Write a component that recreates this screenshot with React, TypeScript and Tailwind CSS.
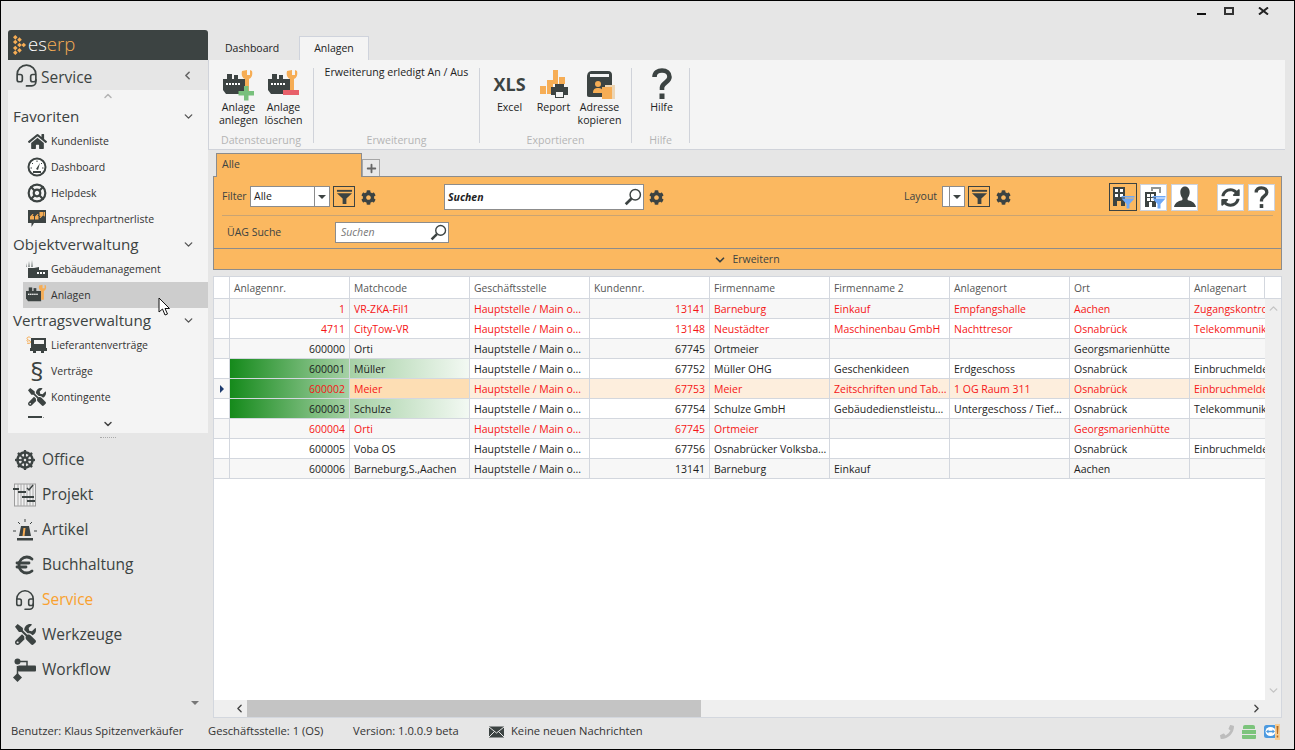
import React from 'react';
import { ChevronDown, ChevronLeft, ChevronRight, ChevronUp, Euro, Headset, LifeBuoy, Plus } from 'lucide-react';
import { FaCog, FaDharmachakra, FaHome, FaPhoneAlt, FaSyncAlt, FaTools } from 'react-icons/fa';

const DARK = '#3c4342';

const Logo = () => (
  <svg width="13" height="20" viewBox="0 0 17 26">
    {[[3, 3], [3, 9], [3, 17], [3, 23], [8.5, 6], [8.5, 13], [8.5, 20], [14, 13]].map(([x, y], i) => (
      <path key={i} d={`M${x} ${y - 3}L${x + 3} ${y}L${x} ${y + 3}L${x - 3} ${y}Z`} fill="#f6ad55" />
    ))}
  </svg>
);

const Factory = ({ size = 32, sign }: { size?: number; sign?: 'plus' | 'minus' }) => (
  <svg width={size} height={size} viewBox="0 0 32 32">
    <rect x="4" y="5" width="5" height="6" fill={DARK} />
    <rect x="11" y="6" width="4" height="5" fill={DARK} />
    <path d="M0 10H22V25H3L0 21Z" fill={DARK} />
    {[3, 6, 9, 12, 15].map(x => <rect key={x} x={x} y="14" width="2" height="2" fill="#fff" />)}
    <path d="M19 2C18 6 19.5 9 22 10V23H26V10C28.5 9 30 6 29 2L27 1V6H24V1Z" fill="#f6ad55" />
    {sign === 'plus' && <path d="M21 17H25.5V22H31V26.5H25.5V31.5H21V26.5H15.5V22H21Z" fill="#78c07c" />}
    {sign === 'minus' && <rect x="15" y="21" width="16" height="5" fill="#e8606a" />}
  </svg>
);

const Buildings = () => (
  <svg width="24" height="24" viewBox="0 0 24 24">
    <path d="M4 4L5 10H3ZM7 3L8 10H6ZM1 6L2 10H1Z" fill="#8f9594" />
    <path d="M3 11H9L14 10V13H23V21H3Z" fill={DARK} />
    {[12, 15, 18].map(x => <rect key={x} x={x} y="15" width="2" height="2" fill="#fff" />)}
  </svg>
);

const Gauge = () => (
  <svg width="20" height="20" viewBox="0 0 20 20">
    <circle cx="10" cy="10" r="8.5" fill="#fff" stroke={DARK} strokeWidth="2" />
    <path d="M3.5 11H5M5 6L6 7M10 3.5V5M15 6L14 7M15 11H16.5" stroke={DARK} strokeWidth="1" />
    <path d="M9 12L13 6L11 13Z" fill={DARK} />
    <path d="M6 15H14" stroke={DARK} strokeWidth="2" />
  </svg>
);

const Quote = () => (
  <svg width="20" height="20" viewBox="0 0 20 20">
    <path d="M1 1H19V14H7L4.5 18V14H1Z" fill={DARK} />
    <path d="M3.5 10V7L6 4.5H7L6 6.5H7.5V10ZM8.5 10V7L11 4.5H12L11 6.5H12V10Z" fill="#f6ad55" transform="translate(-0.5 0.5)" />
    <path d="M12.5 3H16V6.5L13.5 9H12.5L13.5 7H12.5ZM16.5 3H18V6.5L17 8V7H16.5Z" fill="#f6ad55" />
  </svg>
);

const Truck = () => (
  <svg width="22" height="20" viewBox="0 0 22 20">
    <path d="M5 3H20V13H21V16H18V18H15V16H10V18H7V16H4V13H5Z" fill={DARK} />
    <rect x="8" y="5" width="10" height="4" fill="#f4f4f4" />
    <path d="M4.5 2.5C3 1.5 1 2 1 3.5C1 5.5 4.5 5 4.5 7C4.5 8.5 2.5 9 1 8M1.5 4.5C0.5 5.5 1 6.5 2.5 7" fill="none" stroke="#f6ad55" strokeWidth="1" />
  </svg>
);

const CutOffIcon = () => (
  <svg width="22" height="20" viewBox="0 0 22 20">
    <rect x="2" y="3" width="14" height="6" fill={DARK} />
    <rect x="4" y="5" width="9" height="2" fill="#f4f4f4" />
    <path d="M17 4L21 8H17Z" fill={DARK} />
  </svg>
);

const Gantt = () => (
  <svg width="24" height="24" viewBox="0 0 24 24">
    <rect x="1.5" y="1" width="21" height="22" fill="#f0f0f0" stroke="#9c9c9c" />
    <path d="M5 1V23M8 1V23M11 1V23M14 1V23M17 1V23M20 1V23" stroke="#a8a8a8" strokeWidth="1" />
    <path d="M0 5H6V7H0ZM5 8H13V10H5ZM9 13H21V15H9ZM14 17H22V19H14Z" fill={DARK} />
    <path d="M14 5L16 7L20 2" fill="none" stroke={DARK} strokeWidth="1.5" />
  </svg>
);

const Alarm = () => (
  <svg width="24" height="24" viewBox="0 0 24 24">
    <path d="M8 8H16L18 18H6Z" fill={DARK} />
    <path d="M10.5 10H12.5L11.5 18H9.5Z" fill="#f6ad55" />
    <rect x="4" y="20" width="16" height="2.5" fill={DARK} />
    <path d="M12 1V4M5 4L7 6M19 4L17 6M0 13H3M21 13H24" stroke={DARK} strokeWidth="1" />
  </svg>
);

const Workflow = () => (
  <svg width="24" height="24" viewBox="0 0 24 24">
    <circle cx="4.5" cy="3.5" r="3" fill={DARK} />
    <path d="M4.5 15L9 19.5L4.5 24L0 19.5Z" fill={DARK} />
    <path d="M4 3.5H14V8M4.5 8V16" fill="none" stroke={DARK} strokeWidth="1.5" />
    <rect x="5" y="7.5" width="18" height="6" rx="1" fill={DARK} />
  </svg>
);

const Funnel = ({ color = DARK, size = 18 }: { color?: string; size?: number }) => (
  <svg width={size} height={size} viewBox="0 0 18 18">
    <rect x="1" y="2" width="16" height="2" fill={color} />
    <path d="M1 5.5H17L11 11V17H7V11Z" fill={color} />
  </svg>
);

const Magnifier = ({ size = 16 }: { size?: number }) => (
  <svg width={size} height={size} viewBox="0 0 16 16">
    <circle cx="10" cy="6" r="4.6" fill="#fff" stroke={DARK} strokeWidth="1.3" />
    <path d="M6.5 9.5L1.5 14.5" stroke={DARK} strokeWidth="2.4" />
  </svg>
);

const Report = () => (
  <svg width="32" height="32" viewBox="0 0 32 32">
    <rect x="2" y="17" width="6" height="8" fill="#f6ad55" />
    <rect x="9" y="11" width="6" height="14" fill="#f6ad55" />
    <rect x="15" y="1" width="5" height="14" fill="#f6ad55" />
    <rect x="21" y="8" width="6" height="7" fill="#f6ad55" />
    <path d="M17 15H26V18H30V26H26V29H17V26H13V18H17Z" fill={DARK} />
    <rect x="18" y="23" width="7" height="5" fill="#f4f4f4" />
  </svg>
);

const AddressBook = () => (
  <svg width="32" height="32" viewBox="0 0 32 32">
    <path d="M3 8C3 4 5 2 8 2H24C27 2 28 4 28 6V28H5C3.5 28 3 27 3 26Z" fill={DARK} />
    <path d="M6 5H25V8H6Z" fill="#f4f4f4" />
    <circle cx="14" cy="15" r="3" fill="#f6ad55" />
    <path d="M9 24C9 20 11 19 14 19C17 19 19 20 19 24Z" fill="#f6ad55" />
    <rect x="21" y="16" width="10" height="14" fill="#ecd5b4" />
    <rect x="18" y="18" width="10" height="12" fill="#f6ad55" />
  </svg>
);

const FilterBuilding = ({ stacked }: { stacked?: boolean }) => (
  <svg width="24" height="24" viewBox="0 0 24 24">
    {stacked && <path d="M9 2H19V8H17V4H11V6H9Z" fill="#8f9594" />}
    <path d={stacked ? 'M3 7H14V22H10V17H7V22H3Z' : 'M2 2H14V21H10V16H6V21H2Z'} fill={DARK} />
    {(stacked ? [[5, 9], [9, 9], [5, 13], [9, 13]] : [[4, 4], [9, 4], [4, 9], [9, 9]]).map(([x, y]) => (
      <rect key={`${x}-${y}`} x={x} y={y} width="3" height="3" fill="#fff" />
    ))}
    <rect x="10.5" y="11" width="13" height="1.5" fill="#6ea8f7" />
    <path d="M10.5 13.5H23.5L18.5 19V23.5H15.5V19Z" fill="#6ea8f7" />
  </svg>
);

const Bust = () => (
  <svg width="24" height="24" viewBox="0 0 24 24">
    <path d="M12 1.5C15 1.5 16.7 4 16.7 7.3C16.7 9.8 15.7 11.8 14.6 13V15C17.6 16 22 17 23 22H1C2 17 6.4 16 9.4 15V13C8.3 11.8 7.3 9.8 7.3 7.3C7.3 4 9 1.5 12 1.5Z" fill={DARK} />
  </svg>
);

const HelpMark = ({ w, h, className }: { w: number; h: number; className?: string }) => (
  <svg className={className} width={w} height={h} viewBox="0 0 20 31">
    <path d="M2.5 9C2.5 4.5 6 2.5 10 2.5C14.5 2.5 17.5 5 17.5 9C17.5 14 10.5 14.5 10 19.5V22" fill="none" stroke={DARK} strokeWidth="4.6" />
    <rect x="7.5" y="25.5" width="5" height="5.5" fill={DARK} />
  </svg>
);

const Envelope = () => (
  <svg width="15" height="12" viewBox="0 0 15 12">
    <rect width="15" height="11" y="0.5" fill={DARK} />
    <path d="M0 1L7.5 7L15 1M0 11L5.5 5.5M15 11L9.5 5.5" fill="none" stroke="#e6e6e6" strokeWidth="1" />
  </svg>
);

const TeamViewer = () => (
  <svg width="16" height="16" viewBox="0 0 16 16">
    <rect x="0" y="1" width="13" height="13" rx="2.5" fill="#4c9ae0" />
    <ellipse cx="6.5" cy="7.5" rx="5" ry="4.5" fill="#fff" />
    <path d="M2 7.5L4.5 5.5V6.8H8.5V5.5L11 7.5L8.5 9.5V8.2H4.5V9.5Z" fill="#4c9ae0" />
    <rect x="11" y="0" width="5" height="16" fill="#f6cd95" />
    <path d="M12.5 2H14.5L14 10H13ZM12.7 11.5H14.3V13.5H12.7Z" fill="#b56a20" />
  </svg>
);

const SideItem = ({ icon, label, active }: { icon: React.ReactNode; label?: string; active?: boolean }) => (
  <div className={`h-[26px] shrink-0 ml-[15px] flex items-center text-[10.5px] text-[#333] ${active ? 'bg-[#cdcdcd]' : ''}`}>
    <div className="w-[28px] flex justify-center">{icon}</div>
    {label && <span className="pt-[2px]">{label}</span>}
  </div>
);

const SideSection = ({ label }: { label: string }) => (
  <div className="h-[24px] shrink-0 pl-[5px] pr-[13px] flex items-center justify-between text-[15.2px] text-[#3c4342]">
    <span>{label}</span>
    <ChevronDown size={13} strokeWidth={2.5} color="#555" />
  </div>
);

const ModuleItem = ({ icon, label, orange }: { icon: React.ReactNode; label: string; orange?: boolean }) => (
  <div className={`h-[35px] flex items-center text-[15.5px] ${orange ? 'text-[#f9a12e]' : 'text-[#3c4342]'}`}>
    <div className="w-[34px] flex justify-center">{icon}</div>
    <span>{label}</span>
  </div>
);

const Sidebar = () => (
  <aside className="w-[200px] ml-[7px] flex flex-col shrink-0">
    <div className="h-[30px] bg-[#3c4342] rounded-t-[3px] flex items-center pl-[5px] gap-[2px]">
      <Logo />
      <span className="text-[18.5px] font-light leading-none pb-[2px] text-white">es<span className="text-[#f6ad55]">erp</span></span>
    </div>
    <div className="h-[30px] flex items-center pl-[6px] pr-[14px] text-[15.5px] text-[#3c4342]">
      <Headset size={25} strokeWidth={1.6} color={DARK} />
      <span className="ml-[2px] pt-[5px]">Service</span>
      <ChevronLeft size={13} strokeWidth={3} color="#666" className="ml-auto" />
    </div>
    <div className="h-[343px] bg-[#f4f4f4] flex flex-col relative overflow-hidden">
      <div className="h-[14px] shrink-0 flex justify-center"><ChevronUp size={12} strokeWidth={3} color="#b5b5b5" /></div>
      <SideSection label="Favoriten" />
      <SideItem icon={<FaHome size={19} color={DARK} />} label="Kundenliste" />
      <SideItem icon={<Gauge />} label="Dashboard" />
      <SideItem icon={<LifeBuoy size={20} strokeWidth={2.6} color={DARK} />} label="Helpdesk" />
      <SideItem icon={<Quote />} label="Ansprechpartnerliste" />
      <SideSection label="Objektverwaltung" />
      <SideItem icon={<Buildings />} label="Gebäudemanagement" />
      <SideItem icon={<Factory size={22} />} label="Anlagen" active />
      <SideSection label="Vertragsverwaltung" />
      <SideItem icon={<Truck />} label="Lieferantenverträge" />
      <SideItem icon={<span className="text-[26px] leading-none text-[#3c4342]">§</span>} label="Verträge" />
      <SideItem icon={<FaTools size={18} color={DARK} />} label="Kontingente" />
      <SideItem icon={<CutOffIcon />} />
      <div className="absolute bottom-0 left-0 right-0 h-[15px] bg-[#f4f4f4] flex justify-center">
        <ChevronDown size={12} strokeWidth={3} color="#444" />
      </div>
    </div>
    <div className="h-[9px] flex justify-center items-center">
      <div className="w-[16px] h-[2px] border-t border-dotted border-[#aaa]" />
    </div>
    <div className="flex flex-col">
      <ModuleItem icon={<FaDharmachakra size={20} color={DARK} />} label="Office" />
      <ModuleItem icon={<Gantt />} label="Projekt" />
      <ModuleItem icon={<Alarm />} label="Artikel" />
      <ModuleItem icon={<Euro size={24} strokeWidth={2.8} color={DARK} />} label="Buchhaltung" />
      <ModuleItem icon={<Headset size={22} strokeWidth={1.7} color={DARK} />} label="Service" orange />
      <ModuleItem icon={<FaTools size={21} color={DARK} />} label="Werkzeuge" />
      <ModuleItem icon={<Workflow />} label="Workflow" />
    </div>
    <div className="mt-[14px] flex justify-end pr-[9px]">
      <div className="w-0 h-0 border-x-[4px] border-x-transparent border-t-[4px] border-t-[#777]" />
    </div>
  </aside>
);

const RibbonBtn = ({ w, icon, lines }: { w: string; icon: React.ReactNode; lines: string[] }) => (
  <div className={`${w} flex flex-col items-center text-[10.6px] leading-[13px] text-[#222]`}>
    <div className="h-[33px] flex items-center justify-center">{icon}</div>
    <div className="text-center whitespace-nowrap">
      {lines.map(l => <div key={l}>{l}</div>)}
    </div>
  </div>
);

const RibbonGroup = ({ w, label, className, children }: { w: string; label: string; className?: string; children: React.ReactNode }) => (
  <div className={`${w} h-[75px] mt-[8px] border-r border-[#d0d3da]`}>
    <div className={`h-[66px] flex justify-center ${className ?? ''}`}>{children}</div>
    <div className="text-[10.6px] leading-[13px] text-[#b4b4b4] text-center">{label}</div>
  </div>
);

const Ribbon = () => (
  <div className="w-[1077px]">
    <div className="h-[30px] flex items-end">
      <div className="w-[91px] h-[23px] pl-[17px] flex items-center text-[10.5px] text-[#222]">Dashboard</div>
      <div className="w-[70px] h-[24px] bg-[#f4f4f4] border border-b-0 border-[#cfd3dc] flex items-center justify-center text-[10.5px] text-[#222]">Anlagen</div>
    </div>
    <div className="h-[90px] bg-[#f4f4f4] border-l border-b border-[#d0d3da] flex">
      <RibbonGroup w="w-[105px]" label="Datensteuerung">
        <RibbonBtn w="w-[45px]" icon={<Factory sign="plus" />} lines={['Anlage', 'anlegen']} />
        <RibbonBtn w="w-[45px]" icon={<Factory sign="minus" />} lines={['Anlage', 'löschen']} />
      </RibbonGroup>
      <RibbonGroup w="w-[166px]" label="Erweiterung">
        <div className="text-[10.6px] leading-[13px] text-[#222] whitespace-nowrap -mt-[2px]">Erweiterung erledigt An / Aus</div>
      </RibbonGroup>
      <RibbonGroup w="w-[152px]" label="Exportieren">
        <RibbonBtn w="w-[44px]" icon={<span className="text-[18px] font-bold text-[#3c4342]">XLS</span>} lines={['Excel']} />
        <RibbonBtn w="w-[44px]" icon={<Report />} lines={['Report']} />
        <RibbonBtn w="w-[48px]" icon={<AddressBook />} lines={['Adresse', 'kopieren']} />
      </RibbonGroup>
      <RibbonGroup w="w-[58px]" label="Hilfe" className="pl-[2px]">
        <RibbonBtn w="w-[44px]" icon={<HelpMark w={20} h={31} className="-mt-[3px]" />} lines={['Hilfe']} />
      </RibbonGroup>
    </div>
  </div>
);

const ToolBtn = ({ active, children }: { active?: boolean; children: React.ReactNode }) => (
  <div className={`flex items-center justify-center ${active ? 'w-[28px] h-[28px] border border-[#3c4342]' : 'w-[27px] h-[27px] bg-white border border-[#cdd2dc]'}`}>
    {children}
  </div>
);

const FunnelBtn = () => (
  <div className="w-[22px] h-[21px] mb-[1px] border border-[#3c4342] flex items-center justify-center"><Funnel size={17} /></div>
);

const Caret = () => <div className="w-0 h-0 border-x-[4px] border-x-transparent border-t-[4px] border-t-[#3c4342]" />;

const FilterPanel = () => (
  <div className="ml-[5px] w-[1069px]">
    <div className="h-[26px] flex items-end pl-[3px]">
      <div className="w-[146px] h-[24px] bg-[#fbb860] border border-b-0 border-[#8c8c8c] pl-[5px] pt-[3px] text-[10.5px] leading-[14px] text-[#3c4342] relative top-[1px]">Alle</div>
      <div className="w-[18px] h-[17px] bg-[#e8e8e8] border border-b-0 border-[#a6a6a6] flex items-center justify-center">
        <Plus size={13} strokeWidth={3.4} color="#666" />
      </div>
    </div>
    <div className="bg-[#fbb860] border border-[#8c8c8c] text-[10.5px] text-[#3c4342]">
      <div className="mx-[8px] h-[39px] pt-[2px] border-b border-[#c9a473] flex items-center">
        <span className="w-[28px]">Filter</span>
        <div className="w-[80px] h-[21px] mb-[1px] bg-white border border-[#8c8c8c] flex items-center pl-[3px] text-[#222]">
          <span className="flex-1 pt-[1px]">Alle</span>
          <div className="w-[15px] h-full border-l border-[#8c8c8c] flex items-center justify-center"><Caret /></div>
        </div>
        <div className="ml-[3px]"><FunnelBtn /></div>
        <FaCog size={15} color={DARK} className="ml-[6px]" />
        <div className="ml-[68px] w-[200px] h-[26px] bg-white border border-[#8c8c8c] flex items-center pl-[3px] pr-[1px] justify-between">
          <span className="italic font-bold text-[#222] pt-[1px]">Suchen</span>
          <Magnifier size={18} />
        </div>
        <FaCog size={15} color={DARK} className="ml-[5px]" />
        <span className="ml-[240px] w-[38px]">Layout</span>
        <div className="w-[23px] h-[21px] mb-[1px] bg-white border border-[#8c8c8c] flex items-center">
          <div className="w-[7px] h-full border-r border-[#8c8c8c]" />
          <div className="flex-1 flex items-center justify-center"><Caret /></div>
        </div>
        <div className="ml-[3px]"><FunnelBtn /></div>
        <FaCog size={15} color={DARK} className="ml-[6px]" />
        <div className="ml-[98px]"><ToolBtn active><FilterBuilding /></ToolBtn></div>
        <div className="ml-[3px]"><ToolBtn><FilterBuilding stacked /></ToolBtn></div>
        <div className="ml-[4px]"><ToolBtn><Bust /></ToolBtn></div>
        <div className="ml-[19px]"><ToolBtn><FaSyncAlt size={19} color={DARK} /></ToolBtn></div>
        <div className="ml-[4px] -mr-[8px]"><ToolBtn><HelpMark w={15} h={22} /></ToolBtn></div>
      </div>
      <div className="h-[33px] pl-[13px] flex items-center border-b border-[#8c8c8c]">
        <span className="w-[108px] pt-[1px]">ÜAG Suche</span>
        <div className="w-[114px] h-[21px] mt-[1px] bg-white border border-[#8c8c8c] flex items-center pl-[5px] pr-[1px] justify-between">
          <span className="italic text-[10.5px] text-[#777]">Suchen</span>
          <Magnifier size={17} />
        </div>
      </div>
      <div className="h-[20px] pt-[2px] pr-[2px] flex items-center justify-center gap-[5px]">
        <ChevronDown size={14} strokeWidth={3} color={DARK} />
        <span>Erweitern</span>
      </div>
    </div>
  </div>
);

const HEAD = ['Anlagennr.', 'Matchcode', 'Geschäftsstelle', 'Kundennr.', 'Firmenname', 'Firmenname 2', 'Anlagenort', 'Ort', 'Anlagenart'];
const HS = 'Hauptstelle / Main o...';

type Row = { c: string[]; red?: boolean; sel?: boolean; green?: boolean };
const ROWS: Row[] = [
  { c: ['1', 'VR-ZKA-Fil1', HS, '13141', 'Barneburg', 'Einkauf', 'Empfangshalle', 'Aachen', 'Zugangskontrolle'], red: true },
  { c: ['4711', 'CityTow-VR', HS, '13148', 'Neustädter', 'Maschinenbau GmbH', 'Nachttresor', 'Osnabrück', 'Telekommunikation'], red: true },
  { c: ['600000', 'Orti', HS, '67745', 'Ortmeier', '', '', 'Georgsmarienhütte', ''] },
  { c: ['600001', 'Müller', HS, '67752', 'Müller OHG', 'Geschenkideen', 'Erdgeschoss', 'Osnabrück', 'Einbruchmeldeanlage'], green: true },
  { c: ['600002', 'Meier', HS, '67753', 'Meier', 'Zeitschriften und Tab...', '1 OG Raum 311', 'Osnabrück', 'Einbruchmeldeanlage'], red: true, sel: true, green: true },
  { c: ['600003', 'Schulze', HS, '67754', 'Schulze GmbH', 'Gebäudedienstleistu...', 'Untergeschoss / Tief...', 'Osnabrück', 'Telekommunikation'], green: true },
  { c: ['600004', 'Orti', HS, '67745', 'Ortmeier', '', '', 'Georgsmarienhütte', ''], red: true },
  { c: ['600005', 'Voba OS', HS, '67756', 'Osnabrücker Volksba...', '', '', 'Osnabrück', 'Einbruchmeldeanlage'] },
  { c: ['600006', 'Barneburg,S.,Aachen', HS, '13141', 'Barneburg', 'Einkauf', '', 'Aachen', ''] },
];

const rightAligned = (i: number) => i === 0 || i === 3;

const cellBg = (r: Row, i: number, idx: number) => {
  if (r.green && i === 0) return 'bg-[linear-gradient(90deg,#158a1b,#a6d1a6)]';
  if (r.sel && i === 1) return 'bg-[#fddeb4]';
  if (r.green && i === 1) return 'bg-[linear-gradient(90deg,#a6d1a6,#f3f9f3)]';
  if (r.sel) return 'bg-[#fdeedd]';
  return idx % 2 === 0 ? 'bg-[#f7f7f7]' : 'bg-white';
};

const Grid = () => (
  <div className="mt-[6px] ml-[5px] w-[1069px] flex-1 flex flex-col border border-[#d3d7de] bg-white min-h-0">
    <div className="h-[22px] shrink-0 flex text-[10.3px] text-[#555] border-b border-[#d3d7de]">
      <div className="w-[16px] border-r border-[#d3d7de]" />
      {HEAD.map((h, i) => (
        <div key={h} className={`${i === 8 ? 'w-[75px]' : 'w-[120px]'} border-r border-[#d3d7de] pl-[4px] pt-[3px] flex items-center`}>{h}</div>
      ))}
      <div className="flex-1" />
    </div>
    <div className="flex-1 flex min-h-0">
      <div className="flex-1">
        {ROWS.map((r, idx) => (
          <div key={idx} className="h-[20px] flex text-[10.5px]">
            <div className={`w-[16px] border-r border-b border-[#d3d7de] flex items-center justify-center ${idx % 2 ? 'bg-white' : 'bg-[#f7f7f7]'}`}>
              {r.sel && <div className="w-0 h-0 border-y-[4px] border-y-transparent border-l-[4px] border-l-[#1c3a6e]" />}
            </div>
            {r.c.map((t, i) => (
              <div
                key={i}
                className={`${i === 8 ? 'w-[75px]' : 'w-[120px] border-r'} border-b border-[#d3d7de] px-[4px] pt-[3px] flex items-center overflow-hidden whitespace-nowrap ${rightAligned(i) ? 'justify-end' : ''} ${r.red ? 'text-[#f51515]' : 'text-[#1c1c1c]'} ${cellBg(r, i, idx)}`}
              >
                {t}
              </div>
            ))}
          </div>
        ))}
      </div>
      <div className="w-[16px] bg-[#efefef] flex flex-col items-center justify-between py-[3px]">
        <ChevronUp size={13} strokeWidth={2.5} color="#c4c4c4" />
        <ChevronDown size={13} strokeWidth={2.5} color="#c4c4c4" />
      </div>
    </div>
    <div className="h-[17px] shrink-0 bg-[#efefef] flex items-center">
      <div className="w-[33px] flex justify-end pr-[1px]"><ChevronLeft size={13} strokeWidth={2.5} color="#444" /></div>
      <div className="w-[454px] h-full bg-[#c4c4c4]" />
      <div className="flex-1 flex justify-end pr-[18px]"><ChevronRight size={13} strokeWidth={2.5} color="#444" /></div>
    </div>
  </div>
);

export default function App() {
  return (
    <div className="w-[1295px] h-[750px] box-border border border-black bg-[#e6e6e6] flex flex-col overflow-hidden relative font-['Open_Sans',sans-serif]">
      <div className="h-[29px] shrink-0 flex items-start justify-end">
        <div className="flex items-center pt-[6px] pr-[25px]">
          <div className="w-[9px] h-[8px] flex items-end"><div className="w-[9px] h-[2px] bg-[#111]" /></div>
          <div className="ml-[18px] w-[10px] h-[8px] border-2 border-[#333] bg-[#e6e6e6]" />
          <svg className="ml-[24px]" width="11" height="8" viewBox="0 0 11 8"><path d="M1 0.5L10 7.5M10 0.5L1 7.5" stroke="#222" strokeWidth="2" /></svg>
        </div>
      </div>
      <div className="h-[688px] shrink-0 flex">
        <Sidebar />
        <main className="flex-1 flex flex-col min-w-0">
          <Ribbon />
          <FilterPanel />
          <Grid />
        </main>
      </div>
      <footer className="flex-1 flex items-center text-[11.2px] text-[#333] pr-[14px] pb-[4px]">
        <span className="ml-[10px] w-[197px]">Benutzer: Klaus Spitzenverkäufer</span>
        <span className="w-[145px]">Geschäftsstelle: 1 (OS)</span>
        <span className="w-[136px]">Version: 1.0.0.9 beta</span>
        <Envelope />
        <span className="ml-[7px]">Keine neuen Nachrichten</span>
        <div className="ml-auto flex items-center gap-[8px]">
          <FaPhoneAlt size={14} color="#bdbdbd" className="-scale-x-100" />
          <div className="flex flex-col gap-[1px]">
            <div className="w-[12px] mx-auto h-[4px] rounded-t-[2px] bg-[#7cc47c]" />
            <div className="w-[14px] h-[4px] bg-[#7cc47c]" />
            <div className="w-[14px] h-[4px] rounded-b-[1px] bg-[#7cc47c]" />
          </div>
          <TeamViewer />
        </div>
      </footer>
      <svg className="absolute left-[157px] top-[296px]" width="13" height="20" viewBox="0 0 13 20">
        <path d="M1 1V15L4.5 12L7 18L9.5 17L7 11.5H11.5Z" fill="#fff" stroke="#111" strokeWidth="1" />
      </svg>
    </div>
  );
}
